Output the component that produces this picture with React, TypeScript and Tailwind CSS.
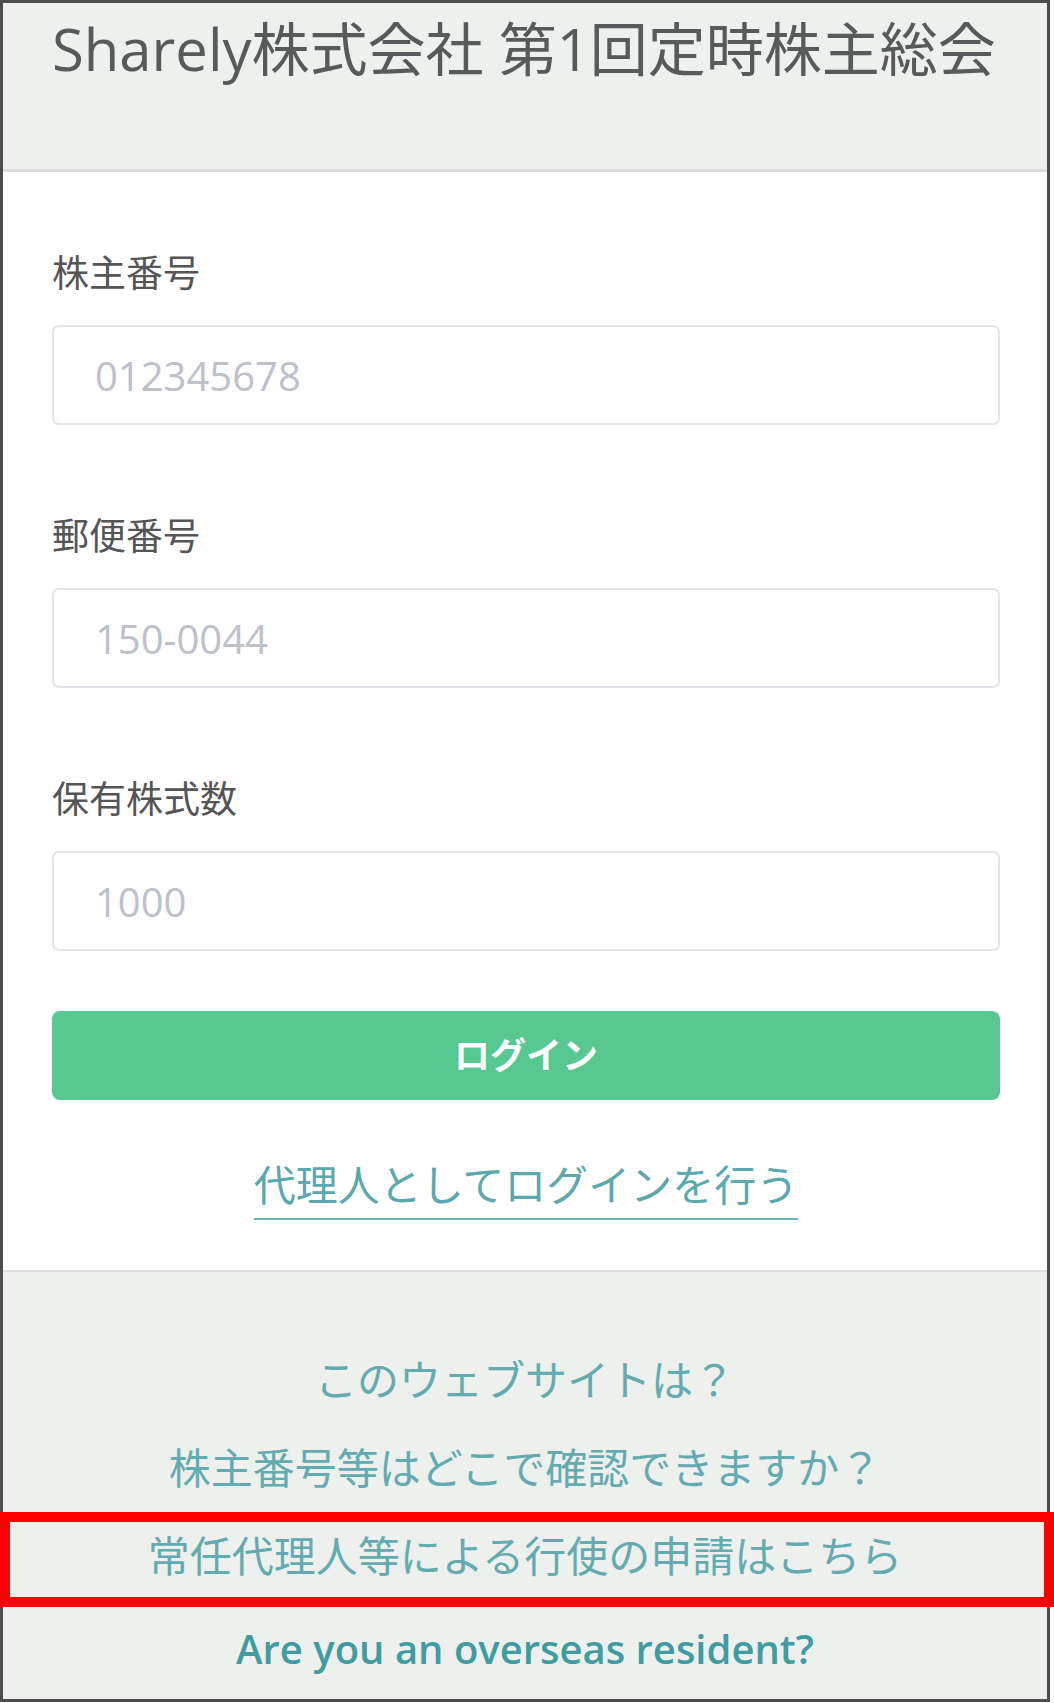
import { useState } from 'react'

const font = { fontFamily: '"Open Sans", "Noto Sans CJK JP", sans-serif' }

const fields = [
  { label: '株主番号', placeholder: '012345678' },
  { label: '郵便番号', placeholder: '150-0044' },
  { label: '保有株式数', placeholder: '1000' },
]

const helpLinks = [
  'このウェブサイトは？',
  '株主番号等はどこで確認できますか？',
  '常任代理人等による行使の申請はこちら',
]

export default function App() {
  const [values, setValues] = useState<string[]>(['', '', ''])

  const update = (i: number, v: string) => {
    const next = [...values]
    next[i] = v
    setValues(next)
  }

  return (
    <div className="relative w-[1054px] h-[1703px] bg-white" style={font}>
      <div className="w-[1050px] h-[1702px] border-[3px] border-[#4d4d4d] flex flex-col bg-white">
        {/* header */}
        <div className="h-[170px] bg-[#eef0ee] border-b-[3px] border-[#dcdedc] pt-[17px] pl-[49px]">
          <h1 className="text-[58px] leading-[58px] text-[#58595b] whitespace-nowrap">
            Sharely株式会社 第1回定時株主総会
          </h1>
        </div>

        {/* login form */}
        <div className="bg-white pt-[76px] pl-[49px] pr-[47px] pb-[50px] border-b-[2px] border-[#dddfdd]">
          {fields.map((f, i) => (
            <div key={f.label} className={i === 0 ? '' : 'mt-[86px]'}>
              <div className="h-[50px] flex items-center text-[37px] text-[#555555]">{f.label}</div>
              <input
                value={values[i]}
                onChange={(e) => update(i, e.target.value)}
                placeholder={f.placeholder}
                className="mt-[27px] block w-full h-[100px] rounded-[7px] border-2 border-[#e3e4ea] bg-white pl-[41px] text-[40px] text-[#555] placeholder:text-[#bcc1ca] outline-none"
              />
            </div>
          ))}

          <button className="mt-[60px] w-full h-[89px] rounded-[8px] bg-[#56c890] text-white text-[36px] font-bold">
            ログイン
          </button>

          <div className="mt-[61px] flex justify-center">
            <a className="inline-block h-[59px] text-[42px] leading-[48px] text-[#5ba8ae] border-b-2 border-[#6fb3b8]">
              代理人としてログインを行う
            </a>
          </div>
        </div>

        {/* help links */}
        <div className="flex-1 bg-[#eef0ee] pt-[63px] flex flex-col items-center">
          {helpLinks.map((t) => (
            <div key={t} className="h-[88px] flex items-center text-[42px] text-[#62acaf]">
              {t}
            </div>
          ))}
          <div className="h-[100px] flex items-center text-[40px] font-semibold text-[#3f9ca0]">
            Are you an overseas resident?
          </div>
        </div>
      </div>

      {/* annotation box */}
      <div className="absolute left-0 top-[1512px] w-[1054px] h-[95px] border-[10px] border-[#ff0000]" />
    </div>
  )
}
